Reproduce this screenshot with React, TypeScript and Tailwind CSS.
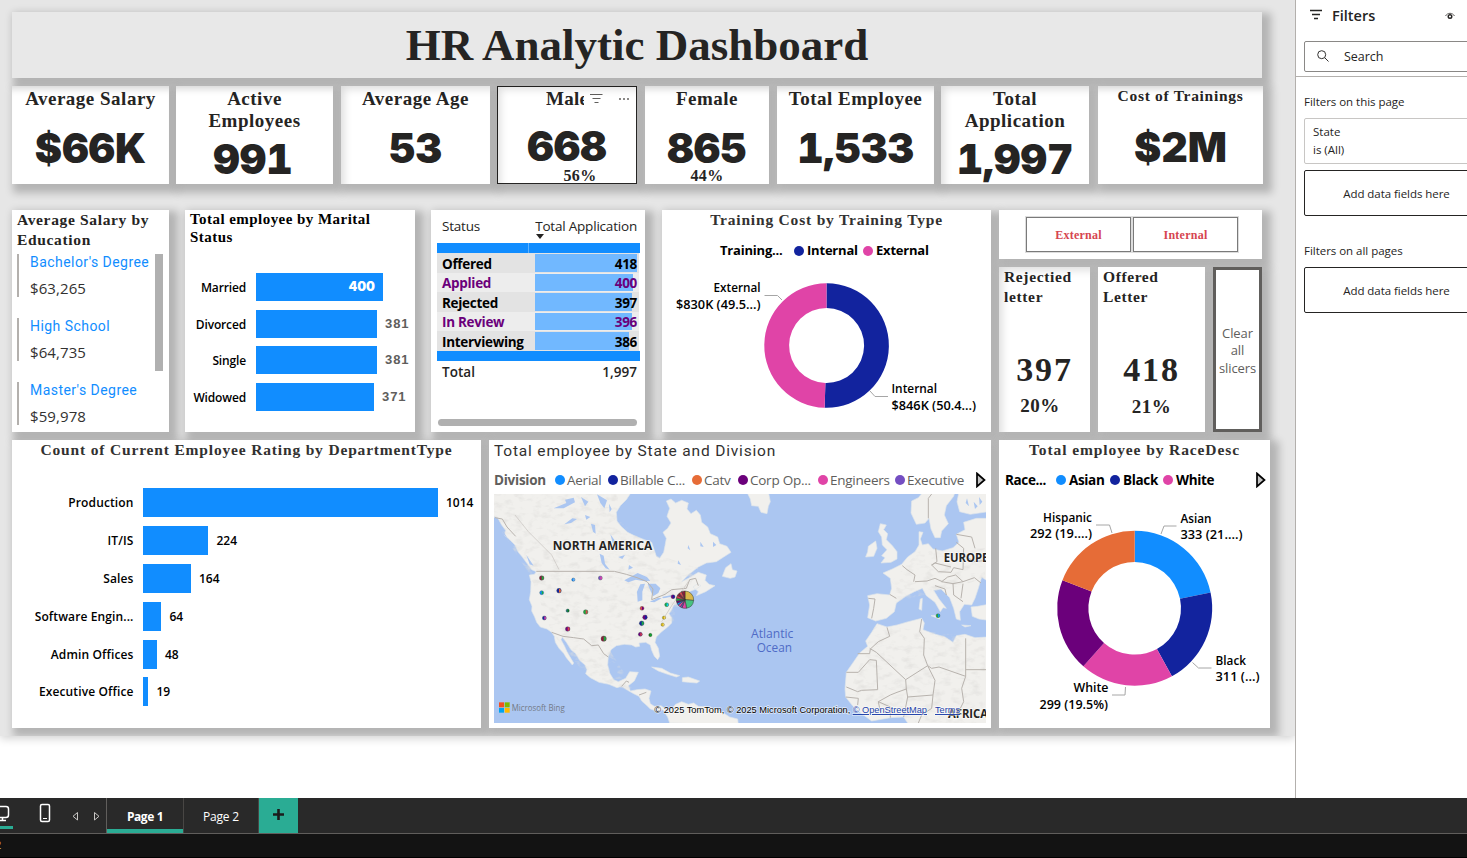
import type { ReactNode } from "react";

const SHADOW = "shadow-[5px_5px_8px_4px_rgba(0,0,0,0.22)]";

function Card({ className = "", shade = "", children }: { className?: string; shade?: string; children?: ReactNode }) {
  return (
    <section className={`relative shrink-0 overflow-visible bg-white ${SHADOW} ${className}`}>
      {shade && <div className={`pointer-events-none absolute inset-0 ${shade}`} />}
      {children}
    </section>
  );
}

const TOP = "shadow-[inset_0_9px_7px_-6px_rgba(0,0,0,0.16)]";
const TOP_LEFT = "shadow-[inset_8px_8px_8px_-5px_rgba(0,0,0,0.14)]";

function Kpi({
  width,
  gap,
  shade = TOP,
  title,
  titleClass = "text-[19px] leading-[22px] tracking-[0.5px] pt-[2px]",
  value,
  valueClass = "mt-[21px]",
  note,
}: {
  width: string;
  gap: string;
  shade?: string;
  title: ReactNode;
  titleClass?: string;
  value: string;
  valueClass?: string;
  note?: ReactNode;
}) {
  return (
    <Card className={`flex h-[98px] flex-col items-center ${width} ${gap}`} shade={shade}>
      <h2 className={`text-center font-['Liberation_Serif',serif] font-bold whitespace-nowrap text-[#252423] ${titleClass}`}>{title}</h2>
      <div className={`font-['Inter',sans-serif] text-[41px] leading-[34px] font-black whitespace-nowrap text-[#252423] tabular-nums ${valueClass}`}>{value}</div>
      {note}
    </Card>
  );
}

const education = [
  { name: "Bachelor's Degree", pay: "$63,265" },
  { name: "High School", pay: "$64,735" },
  { name: "Master's Degree", pay: "$59,978" },
];

const marital = [
  { name: "Married", value: 400, width: 127 },
  { name: "Divorced", value: 381, width: 121 },
  { name: "Single", value: 381, width: 121 },
  { name: "Widowed", value: 371, width: 118 },
];

const departments = [
  { name: "Production", value: 1014, width: 295 },
  { name: "IT/IS", value: 224, width: 65.5 },
  { name: "Sales", value: 164, width: 48 },
  { name: "Software Engin...", value: 64, width: 18.5 },
  { name: "Admin Offices", value: 48, width: 14 },
  { name: "Executive Office", value: 19, width: 5.5 },
];

const statuses = [
  { name: "Offered", value: 418, width: 102 },
  { name: "Applied", value: 400, width: 97.5 },
  { name: "Rejected", value: 397, width: 97 },
  { name: "In Review", value: 396, width: 96.5 },
  { name: "Interviewing", value: 386, width: 94 },
];

function ring(cx: number, cy: number, outer: number, inner: number, from: number, to: number) {
  const p = (r: number, a: number) => {
    const t = (a * Math.PI) / 180;
    return `${(cx + r * Math.sin(t)).toFixed(2)} ${(cy - r * Math.cos(t)).toFixed(2)}`;
  };
  const big = to - from > 180 ? 1 : 0;
  return `M${p(outer, from)}A${outer} ${outer} 0 ${big} 1 ${p(outer, to)}L${p(inner, to)}A${inner} ${inner} 0 ${big} 0 ${p(inner, from)}Z`;
}

function ChartText({ x, y, w, children }: { x: number; y: number; w: number; children: string }) {
  return (
    <text x={x} y={y} textLength={w} lengthAdjust="spacingAndGlyphs" className="fill-black font-['Open_Sans',sans-serif] text-[12px] font-semibold">
      {children}
    </text>
  );
}

function TrainingDonut() {
  return (
    <svg width="329" height="165" viewBox="662 267 329 165" className="block">
      <path d={ring(826.5, 345.5, 62.3, 37.5, 0, 181.7)} fill="#12239e" />
      <path d={ring(826.5, 345.5, 62.3, 37.5, 181.7, 360)} fill="#e044a7" />
      <path d="M764.5 295.5h13l4.5 4.500M870 391l5 5.500h13" fill="none" stroke="#a6a6a6" />
      <ChartText x={713.5} y={292} w={47}>External</ChartText>
      <ChartText x={676} y={309} w={84.500}>$830K (49.5...)</ChartText>
      <ChartText x={891.5} y={393} w={45.500}>Internal</ChartText>
      <ChartText x={891.5} y={410} w={84.500}>$846K (50.4...)</ChartText>
    </svg>
  );
}

function RaceDonut() {
  const parts = [
    { to: 78.2, fill: "#118dff" },
    { to: 151.3, fill: "#12239e" },
    { to: 221.5, fill: "#e044a7" },
    { to: 291.3, fill: "#6b007b" },
    { to: 360, fill: "#e66c37" },
  ];
  return (
    <svg width="271" height="230" viewBox="999 498 271 230" className="block">
      {parts.map((p, i) => (
        <path key={p.fill} d={ring(1134.7, 608.3, 77.5, 46.3, i ? parts[i - 1].to : 0, p.to)} fill={p.fill} />
      ))}
      <path d="M1096 525h13.500l2.500 8M1176.500 526h-12.500l-3 8M1192.500 662.500l6 5.500h13M1112 695h13l.5-8" fill="none" stroke="#a6a6a6" />
      <ChartText x={1043} y={522} w={49}>Hispanic</ChartText>
      <ChartText x={1030} y={538} w={62}>292 (19....)</ChartText>
      <ChartText x={1180.5} y={523} w={31}>Asian</ChartText>
      <ChartText x={1180.5} y={539} w={62}>333 (21....)</ChartText>
      <ChartText x={1215.5} y={665} w={30.500}>Black</ChartText>
      <ChartText x={1215.5} y={681} w={44}>311 (...)</ChartText>
      <ChartText x={1073.5} y={692} w={35}>White</ChartText>
      <ChartText x={1039.5} y={709} w={68.500}>299 (19.5%)</ChartText>
    </svg>
  );
}

const mapDots: [number, number, number, string, string][] = [
  [170, 429, 7, "#8c1a3c", "#1aab40"],
  [265, 434, 5, "#118dff", "#8fb8e8"],
  [346, 429, 6, "#744ec2", "#e044a7"],
  [170, 473, 6, "#118dff", "#1aab40"],
  [222, 467, 7, "#12239e", "#e66c37"],
  [248, 527, 5, "#197278", "#107c10"],
  [302, 531, 7, "#1aab40", "#d64550"],
  [178, 549, 6, "#12239e", "#e044a7"],
  [248, 582, 7, "#6b007b", "#d64550"],
  [356, 611, 8, "#8c1a3c", "#1aab40"],
  [471, 520, 6, "#d64550", "#6b007b"],
  [480, 547, 7, "#6b007b", "#12239e"],
  [470, 565, 7, "#12239e", "#1aab40"],
  [466, 598, 6, "#6b007b", "#d64550"],
  [496, 600, 5, "#107c10", "#1aab40"],
  [537, 548, 5, "#d9b300", "#e8d16c"],
  [533, 569, 5, "#d9b300", "#e8d16c"],
  [545, 509, 6, "#1aab40", "#15c6f4"],
  [564, 485, 6, "#6b007b", "#12239e"],
  [1359, 542, 6, "#1aab40", "#118dff"],
];

function BubblePie() {
  const colors = ["#d9b84a", "#46c281", "#e044a7", "#744ec2", "#e044a7", "#118dff", "#6b007b", "#1aab40", "#d64550", "#8c1a3c", "#d64550", "#8c1a3c"];
  const stops = [0, 95, 170, 200, 214, 232, 246, 262, 280, 300, 318, 338, 360];
  return (
    <g stroke="#2c3a2e" strokeWidth="1.5">
      {colors.map((c, i) => (
        <path key={i} d={ring(600, 494, 26, 0.1, stops[i], stops[i + 1])} fill={c} />
      ))}
    </g>
  );
}

/* The map is drawn on a grid three times as fine as its box. */
function WorldMap() {
  return (
    <svg width="492" height="229" viewBox="27 177 1476 687" className="block">
      <defs>
        <filter id="relief" x="0" y="0" width="100%" height="100%">
          <feTurbulence type="fractalNoise" baseFrequency="0.035 0.06" numOctaves="3" seed="4" />
          <feColorMatrix values="0 0 0 0 0.75  0 0 0 0 0.74  0 0 0 0 0.72  0 2.6 0 0 -1.25" />
          <feComposite in2="SourceGraphic" operator="in" />
        </filter>
      </defs>
      <rect x="27" y="177" width="1476" height="687" fill="#abc6f1" />
      <g id="land" fill="#f1f0ed" stroke="#dfe5ea" strokeWidth="2" strokeLinejoin="round">
        <path d="M20 170L20 244L38 248L50 270L62 286L58 300L78 318L90 330L100 352L112 366L128 388L140 404L154 410L148 418L133 420L138 440L137 470L133 494L141 514L140 528L149 546L155 562L166 576L186 582L200 592L208 604L211 622L222 640L236 655L244 668L262 690L266 684L254 664L246 650L238 632L228 614L232 606L244 622L258 644L272 656L284 676L300 690L306 704L302 716L316 728L342 742L372 748L396 758L410 754L428 766L446 776L462 784L470 798L484 810L496 822L514 828L534 824L548 846L554 864L760 870L758 852L734 846L712 832L692 822L668 816L640 814L626 804L610 808L590 800L572 808L556 826L544 824L528 812L508 814L496 806L492 790L498 768L480 762L456 764L436 768L430 752L448 738L460 712L434 710L422 730L400 740L386 734L374 714L368 690L370 664L378 644L394 632L418 628L440 630L452 636L464 634L462 624L482 622L496 630L500 646L508 664L518 674L524 664L520 640L510 622L514 606L530 590L548 576L560 564L560 548L552 536L560 524L566 510L590 500L612 494L604 482L612 470L634 462L648 452L638 446L624 456L640 470L634 482L662 470L690 452L672 448L660 436L664 420L640 412L610 430L590 440L612 418L640 396L664 384L694 380L716 366L738 352L726 334L704 326L698 306L676 296L668 276L650 262L646 240L634 226L618 236L606 222L610 204L590 196L572 204L558 192L544 198L554 220L546 244L558 264L548 280L534 292L544 310L540 332L536 352L524 370L514 364L508 346L500 322L478 314L452 304L428 292L408 274L396 258L394 232L406 212L424 194L440 170Z" />
        <path d="M712 424L722 398L738 386L742 404L756 408L750 426L736 430Z" />
        <path d="M785 170L796 192L800 212L820 214L828 232L846 236L850 214L856 200L850 170Z" />
        <path d="M500 696L530 700L556 714L584 722L574 726L548 718L520 708ZM592 728L610 726L644 738L636 744L610 742L592 740Z" />
        <path d="M1315 170L1300 188L1280 198L1278 234L1294 268L1320 264L1332 250L1338 282L1350 308L1366 308L1370 288L1390 266L1378 240L1384 212L1406 184L1410 170Z" />
        <path d="M1422 170L1416 200L1424 230L1456 238L1510 230L1510 250L1474 250L1436 262L1440 284L1414 298L1422 322L1404 338L1372 348L1344 342L1330 326L1312 330L1306 312L1314 292L1302 290L1302 330L1290 350L1268 366L1250 388L1222 402L1194 414L1216 430L1220 460L1214 480L1176 476L1148 482L1154 510L1148 548L1172 558L1204 550L1228 530L1234 504L1262 484L1288 470L1312 460L1324 482L1350 502L1366 530L1374 518L1384 520L1362 492L1346 466L1368 462L1394 488L1406 520L1414 552L1426 556L1424 530L1438 508L1460 510L1470 490L1480 460L1490 426L1510 440L1510 170Z" />
        <path d="M1186 266L1204 270L1196 284L1208 296L1204 314L1222 332L1236 350L1236 372L1218 382L1188 384L1200 368L1190 362L1206 344L1192 330L1190 306L1180 290Z" />
        <path d="M1150 334L1172 318L1176 340L1166 364L1142 366L1148 350Z" />
        <path d="M1306 492L1312 490L1310 526L1302 522ZM1338 542L1362 540L1364 552ZM1430 570L1458 572L1440 576Z" />
        <path d="M1510 508L1478 514L1458 516L1462 544L1482 552L1510 556Z" />
        <path d="M1176 566L1206 576L1236 570L1270 560L1310 550L1318 564L1314 584L1346 596L1380 606L1404 622L1414 602L1440 598L1470 608L1510 606L1510 870L1272 870L1256 846L1216 848L1160 858L1130 836L1104 814L1082 786L1080 762L1084 712L1106 680L1124 654L1148 634L1142 618L1160 592Z" />
      </g>
      <g filter="url(#relief)" opacity="0.7">
        <path d="M20 177L400 177L395 250L520 360L640 400L560 570L370 640L460 780L300 716L200 592L135 420L20 244ZM1170 570L1500 610V864H1280L1090 780Z" />
        <path d="M1220 440L1300 350L1500 340V430L1400 460L1230 500Z" />
      </g>
      <g fill="#abc6f1">
        <path d="M418 436L440 424L458 414L486 426L496 438L474 438L452 434L430 442ZM458 500L456 470L466 448L480 446L472 470L472 496ZM488 446L512 446L526 460L520 474L504 484L494 462ZM494 500L520 488L530 490L508 502ZM530 486L560 480L556 486L536 490Z" />
        <path d="M344 356L356 362L360 386L374 404L362 400L350 384ZM318 266L330 270L332 296L324 290ZM238 268L262 250L276 252L258 264ZM206 220L244 204L240 194L266 188L270 202L236 220ZM336 178L366 196L358 220L346 204ZM288 186L310 200L300 214ZM376 298L392 320L384 326ZM400 366L420 360L412 372ZM610 330L616 346L608 340ZM646 320L656 336L646 334Z" />
        <path d="M372 206L380 222L374 232ZM300 240L316 246L304 254ZM432 390L444 398L430 404ZM580 376L588 390L578 386ZM684 320L694 330L684 336ZM124 360L146 392L134 388ZM40 268L66 306L58 300ZM1446 190L1452 214L1442 204ZM1466 200L1478 214L1470 222ZM1482 186L1492 200L1484 210Z" />
      </g>
      <g fill="none" stroke="#b8b3ae" strokeWidth="3" strokeLinejoin="round">
        <path d="M154 409H388L424 418L456 428L486 440L504 462L500 494L540 478L560 464L604 460L614 434L632 430L640 452" />
        <path d="M30 248L52 252L66 276L92 304M200 592L234 604L266 608L296 612L320 632L340 630L356 656L370 666M410 754L424 738L432 742M462 780L484 772" />
        <path d="M1150 490L1170 492L1166 520L1160 550M1214 478L1234 490M1252 392L1266 404L1290 420L1286 440M1290 440L1326 438L1350 430L1372 440M1352 340L1356 380L1340 390L1360 410L1398 412L1406 398L1434 404M1340 390L1350 384L1398 396M1434 404L1436 340L1414 322M1370 440L1388 426L1412 420L1434 440L1404 446ZM1434 440L1468 428L1488 444M1404 446L1406 480L1434 500M1434 446L1428 490M1436 362L1470 380L1504 376M1414 298L1460 306L1470 340M1330 250V190L1340 177M1350 452L1380 462L1384 480" />
        <path d="M1206 577L1214 604L1180 620L1156 642L1154 656H1118M1154 640L1174 652L1262 734L1328 692L1316 660L1318 610L1304 590L1310 552M1174 676L1178 764L1130 766L1118 770L1084 756M1174 676L1154 674L1120 712H1084M1262 734L1264 762L1236 772L1216 780L1180 800L1186 830M1328 692L1340 700L1362 696L1442 724V610M1442 704H1503M1442 724L1430 760L1436 800L1416 840M1328 692L1350 736L1344 780L1268 786L1264 762M1268 786L1256 846M1344 780L1340 820L1310 840L1300 864M1082 786L1120 790L1118 810M1180 800L1216 816L1216 848" />
      </g>
      <g fill="none" stroke="#cfcbc8" strokeWidth="2.500">
        <path d="M90 240L130 290L170 330L200 360L222 404M610 440L560 512L530 560" />
      </g>
      {mapDots.map(([x, y, r, a, b]) => (
        <g key={`${x}-${y}`}>
          <circle cx={x} cy={y} r={r} fill={a} stroke="#3a4a48" strokeWidth="1" />
          <path d={`M${x} ${y - r + 1}A${r - 1} ${r - 1} 0 0 1 ${x} ${y + r - 1}Z`} fill={b} />
        </g>
      ))}
      <BubblePie />
      <g className="font-['Open_Sans',sans-serif]">
        <text x="203" y="345" textLength="299" lengthAdjust="spacingAndGlyphs" className="fill-[#252423] stroke-white/70 text-[36px] font-bold [paint-order:stroke]" strokeWidth="4">NORTH AMERICA</text>
        <text x="1376" y="381" textLength="134" lengthAdjust="spacingAndGlyphs" className="fill-[#252423] stroke-white/70 text-[36px] font-bold [paint-order:stroke]" strokeWidth="4">EUROPE</text>
        <text x="1389" y="849" textLength="120" lengthAdjust="spacingAndGlyphs" className="fill-[#252423] stroke-white/70 text-[36px] font-bold [paint-order:stroke]" strokeWidth="4">AFRICA</text>
        <text x="798" y="609" textLength="127" lengthAdjust="spacingAndGlyphs" className="fill-[#4f6bc6] text-[36px] font-medium">Atlantic</text>
        <text x="815" y="650" textLength="106" lengthAdjust="spacingAndGlyphs" className="fill-[#4f6bc6] text-[36px] font-medium">Ocean</text>
        <path d="M42 802h15v15h-15Z" fill="#f25022" />
        <path d="M59 802h15v15h-15Z" fill="#7fba00" />
        <path d="M42 819h15v14h-15Z" fill="#00a4ef" />
        <path d="M59 819h15v14h-15Z" fill="#ffb900" />
        <text x="80" y="828" textLength="159" lengthAdjust="spacingAndGlyphs" className="fill-[#737a86] text-[28px] font-medium">Microsoft Bing</text>
      </g>
      <g className="font-['Liberation_Sans',sans-serif] text-[28.5px] [paint-order:stroke]" stroke="#ffffff" strokeOpacity="0.65" strokeWidth="4">
        <text x="508" y="834" textLength="588" lengthAdjust="spacingAndGlyphs" className="fill-black">© 2025 TomTom, © 2025 Microsoft Corporation,</text>
        <text x="1103" y="834" textLength="223" lengthAdjust="spacingAndGlyphs" className="fill-[#1d3fa8] underline">© OpenStreetMap</text>
        <text x="1350" y="834" textLength="75" lengthAdjust="spacingAndGlyphs" className="fill-[#1d3fa8] underline">Terms</text>
      </g>
    </svg>
  );
}

function Legend({ items, className, dot }: { items: [string, string, string][]; className: string; dot: string }) {
  return (
    <>
      {items.map(([label, color, width]) => (
        <span key={label} className={`flex shrink-0 items-center ${width}`}>
          <i className={`h-[10px] w-[10px] shrink-0 rounded-full ${color} ${dot}`} />
          <span className={`whitespace-nowrap ${className}`}>{label}</span>
        </span>
      ))}
    </>
  );
}

function NextArrow() {
  return (
    <svg width="10" height="16" viewBox="0 0 10 16" className="mb-px shrink-0">
      <path d="M1 1.500L8.500 8L1 14.500Z" fill="#c4c4c4" stroke="#000" strokeWidth="1.700" />
    </svg>
  );
}

function TopRow() {
  return (
    <div className="mt-[8px] flex h-[98px]">
      <Kpi width="w-[157px]" gap="mr-[7px]" title="Average Salary" value="$66K" />
      <Kpi
        width="w-[157px]"
        gap="mr-[8px]"
        title={<>Active<br />Employees</>}
        value="991"
        valueClass="mt-[10px] pr-[3px]"
      />
      <Kpi width="w-[149px]" gap="mr-[7px]" shade={TOP_LEFT} title="Average Age" value="53" />
      <Kpi
        width="w-[140px] outline -outline-offset-1 outline-[#252423]"
        gap="mr-[8px]"
        shade={TOP_LEFT}
        title={
          <span className="flex items-center pl-[49px]">
            <span className="w-[38px] overflow-hidden">Male</span>
            <svg width="42" height="14" viewBox="0 0 42 14" className="ml-[6px]" fill="none">
              <path d="M0 2.500h12.500M2.500 6.500h8M4.500 10.500h4" stroke="#605e5c" />
              <path d="M29 7h2M33 7h2M37 7h2" stroke="#8a8886" strokeWidth="2" />
            </svg>
          </span>
        }
        titleClass="self-start text-[19px] leading-[22px] tracking-[0.3px] pt-[2px]"
        value="668"
        valueClass="mt-[19px]"
        note={<div className="mt-[5px] pl-[26px] font-['Liberation_Serif',serif] text-[16px] leading-[16px] font-bold tracking-[0.4px] text-[#252423]">56%</div>}
      />
      <Kpi
        width="w-[124px]"
        gap="mr-[8px]"
        title="Female"
        value="865"
        note={<div className="mt-[3px] font-['Liberation_Serif',serif] text-[16px] leading-[16px] font-bold tracking-[0.4px] text-[#252423]">44%</div>}
      />
      <Kpi width="w-[157px]" gap="mr-[7px]" title="Total Employee" value="1,533" />
      <Kpi
        width="w-[148px]"
        gap="mr-[9px]"
        shade={TOP_LEFT}
        title={<>Total<br />Application</>}
        value="1,997"
        valueClass="mt-[10px]"
      />
      <Kpi
        width="w-[165px]"
        gap=""
        title="Cost of Trainings"
        titleClass="text-[15.5px] leading-[20px] tracking-[0.7px]"
        value="$2M"
        valueClass="mt-[24px]"
      />
    </div>
  );
}

function MiddleRow() {
  return (
    <div className="mt-[26px] flex h-[222px]">
      <Card className="mr-[16px] flex w-[157px] flex-col">
        <h2 className="pl-[5px] font-['Liberation_Serif',serif] text-[15.5px] leading-[20px] font-bold tracking-[0.65px] whitespace-nowrap text-[#252423]">
          Average Salary by<br />Education
        </h2>
        <div className="mt-[4px] flex pl-[5px]">
          <div className="flex w-[138px] flex-col gap-[21px]">
            {education.map((e) => (
              <div key={e.name} className="h-[43px] border-l-2 border-[#b3b0ad] pl-[11px]">
                <div className="font-['Roboto',sans-serif] text-[14px] leading-[17px] tracking-[0.45px] whitespace-nowrap text-[#118dff]">{e.name}</div>
                <div className="mt-[7px] font-['Open_Sans',sans-serif] text-[15px] leading-[20px] tracking-[0.1px] text-[#323130]">{e.pay}</div>
              </div>
            ))}
          </div>
          <div className="h-[117px] w-[8px] bg-[#b0b0b0]" />
        </div>
      </Card>

      <Card className="mr-[16px] flex w-[230px] flex-col">
        <h2 className="pl-[5px] font-['Liberation_Serif',serif] text-[15px] leading-[18px] font-bold tracking-[0.45px] whitespace-nowrap text-black">
          Total employee by Marital<br />Status
        </h2>
        <div className="mt-[27px] flex flex-col gap-[8.600px]">
          {marital.map((m, i) => (
            <div key={m.name} className="flex h-[28px] items-center">
              <span className="w-[61px] pt-[2px] text-right font-['Open_Sans',sans-serif] text-[12px] font-semibold tracking-[-0.15px] text-black">{m.name}</span>
              <div className="ml-[10px] flex h-full items-center justify-end bg-[#118dff] pr-[8px]" style={{ width: m.width }}>
                {i === 0 && <span className="font-['Inter',sans-serif] text-[12.5px] font-black text-white">{m.value}</span>}
              </div>
              {i > 0 && <span className="ml-[8px] font-['Liberation_Sans',sans-serif] text-[13px] font-bold tracking-[0.95px] text-[#605e5c]">{m.value}</span>}
            </div>
          ))}
        </div>
      </Card>

      <Card className="mr-[17px] flex w-[214px] flex-col pl-[6px] font-['Open_Sans',sans-serif]">
        <div className="flex h-[33px] w-[203px] justify-between pt-[6px] pr-[3px] pl-[5px] text-[13.500px] leading-[20px] tracking-[-0.2px] text-[#252423]">
          <span>Status</span>
          <span className="relative">
            Total Application
            <i className="absolute top-[18px] left-px h-0 w-0 border-x-[4.500px] border-t-[5px] border-x-transparent border-t-[#252423]" />
          </span>
        </div>
        <div className="flex h-[10px] w-[203px] bg-[#118dff]">
          <div className="w-[92px] border-r border-[#5fb2ff]" />
        </div>
        {statuses.map((s, i) => (
          <div
            key={s.name}
            className={`flex h-[19.600px] w-[202px] items-center text-[13.500px] font-bold tracking-[-0.3px] ${i % 2 ? "bg-[#ededed] text-[#6b007b]" : "bg-[#e3e3e3] text-black"}`}
          >
            <span className="w-[98px] pt-[2px] pl-[5px]">{s.name}</span>
            <div className="relative flex h-full w-[102px] items-center justify-end">
              <div className="h-[17.500px] flex-none bg-[#71b8ff]" style={{ width: s.width, marginRight: 102 - s.width }} />
              <span className="absolute right-0 pt-[2px]">{s.value}</span>
            </div>
          </div>
        ))}
        <div className="h-[10px] w-[203px] bg-[#118dff]" />
        <div className="flex w-[203px] justify-between pt-[1px] pr-[3px] pl-[5px] text-[13.500px] leading-[20px] font-semibold tracking-[0.05px] text-[#252423]">
          <span>Total</span>
          <span>1,997</span>
        </div>
        <div className="mt-[37px] ml-px h-[7px] w-[199px] rounded-full bg-[#b0b0b0]" />
      </Card>

      <Card className="mr-[8px] flex w-[329px] flex-col">
        <h2 className="text-center font-['Liberation_Serif',serif] text-[15.500px] leading-[20px] font-bold tracking-[0.8px] text-[#323130]">
          Training Cost by Training Type
        </h2>
        <div className="mt-[11px] flex h-[20px] items-center pl-[58px] font-['Open_Sans',sans-serif] text-[13px] font-bold tracking-[-0.2px] text-black">
          <span className="w-[74px]">Training...</span>
          <Legend items={[["Internal", "bg-[#12239e]", "w-[69px]"], ["External", "bg-[#e044a7]", "w-[70px]"]]} className="" dot="mr-[3px]" />
        </div>
        <div className="mt-[6px]"><TrainingDonut /></div>
      </Card>

      <div className="flex w-[263px] flex-col">
        <Card className="flex h-[49px] items-center gap-[2px] pl-[27px]">
          {["External", "Internal"].map((s) => (
            <button key={s} className="h-[35px] w-[105px] border border-[#7a7a7a] font-['Liberation_Serif',serif] text-[12px] font-bold tracking-[0.25px] text-[#d64550] outline outline-[#dddddd]">
              {s}
            </button>
          ))}
        </Card>
        <div className="mt-[8px] flex h-[165px]">
          <Card className="mr-[8px] w-[91px] font-['Liberation_Serif',serif] font-bold text-[#252423]" shade={TOP_LEFT}>
            <h2 className="pl-[5px] text-[15.500px] leading-[20px] tracking-[0.65px]">Rejectied<br />letter</h2>
            <div className="mt-[46px] text-center text-[34px] leading-[34px] tracking-[1.800px]">397</div>
            <div className="mt-[9px] pr-[9px] text-center text-[19px] leading-[20px] tracking-[0.5px]">20%</div>
          </Card>
          <Card className="mr-[8px] w-[107px] font-['Liberation_Serif',serif] font-bold text-[#252423]">
            <h2 className="pl-[5px] text-[15.500px] leading-[20px] tracking-[0.6px]">Offered<br />Letter</h2>
            <div className="mt-[46px] text-center text-[34px] leading-[34px] tracking-[1.800px]">418</div>
            <div className="mt-[10px] text-center text-[19px] leading-[20px] tracking-[0.5px]">21%</div>
          </Card>
          <Card className="flex w-[49px] items-center justify-center border-[3px] border-[#605e5c]">
            <button className="pt-[3px] text-center font-['Open_Sans',sans-serif] text-[13px] leading-[17.500px] tracking-[-0.1px] text-[#605e5c]">
              Clear<br />all<br />slicers
            </button>
          </Card>
        </div>
      </div>
    </div>
  );
}

function BottomRow() {
  return (
    <div className="mt-[8px] flex h-[288px]">
      <Card className="mr-[8px] flex w-[469px] flex-col">
        <h2 className="text-center font-['Liberation_Serif',serif] text-[15.500px] leading-[20px] font-bold tracking-[0.830px] whitespace-nowrap text-[#323130]">
          Count of Current Employee Rating by DepartmentType
        </h2>
        <div className="mt-[28px] flex flex-col gap-[8.900px] font-['Open_Sans',sans-serif] text-[12px] font-semibold text-black">
          {departments.map((d) => (
            <div key={d.name} className="flex h-[29px] items-center">
              <span className="w-[121.500px] pt-px text-right tracking-[0.120px]">{d.name}</span>
              <div className="ml-[9px] h-full bg-[#118dff]" style={{ width: d.width }} />
              <span className="ml-[8.500px] pt-px">{d.value}</span>
            </div>
          ))}
        </div>
      </Card>

      <Card className="mr-[8px] flex w-[502px] flex-col pl-[5px]">
        <h2 className="pt-px font-['Roboto',sans-serif] text-[15.500px] leading-[20px] tracking-[0.820px] text-[#323130]">Total employee by State and Division</h2>
        <div className="mt-[9px] flex h-[20px] items-center font-['Open_Sans',sans-serif] text-[13.500px] tracking-[-0.25px] text-[#605e5c]">
          <span className="w-[61px] font-bold">Division</span>
          <Legend
            items={[
              ["Aerial", "bg-[#118dff]", "w-[53px]"],
              ["Billable C...", "bg-[#12239e]", "w-[84px]"],
              ["Catv", "bg-[#e66c37]", "w-[46px]"],
              ["Corp Op...", "bg-[#6b007b]", "w-[80px]"],
              ["Engineers", "bg-[#e044a7]", "w-[77px]"],
              ["Executive", "bg-[#744ec2]", "w-[81px]"],
            ]}
            className=""
            dot="mr-[2px]"
          />
          <NextArrow />
        </div>
        <div className="mt-[4px] w-[492px]"><WorldMap /></div>
      </Card>

      <Card className="flex w-[271px] flex-col">
        <h2 className="text-center font-['Liberation_Serif',serif] text-[15.500px] leading-[20px] font-bold tracking-[0.9px] text-[#323130]">Total employee by RaceDesc</h2>
        <div className="mt-[10px] flex h-[20px] items-center pl-[6px] font-['Open_Sans',sans-serif] text-[13.500px] font-bold tracking-[-0.35px] text-black">
          <span className="w-[51px]">Race...</span>
          <Legend items={[["Asian", "bg-[#118dff]", "w-[54px]"], ["Black", "bg-[#12239e]", "w-[53px]"], ["White", "bg-[#e044a7]", "w-[93px]"]]} className="" dot="mr-[3px]" />
          <NextArrow />
        </div>
        <div className="mt-[8px]"><RaceDonut /></div>
      </Card>
    </div>
  );
}

function FiltersPane() {
  return (
    <aside className="w-[172px] overflow-hidden border-l border-[#b3b0ad] bg-white font-['Open_Sans',sans-serif] text-[#252423]">
      <div className="flex h-[77px] flex-col border-b border-[#b3b0ad] pl-[8px]">
        <div className="flex h-[31px] items-center pl-[6px]">
          <svg width="12" height="12" viewBox="0 0 12 12" className="mb-[1px]">
            <path d="M0 1.500h12M2 5.500h8M4 9.500h4" stroke="#252423" strokeWidth="1.300" />
          </svg>
          <span className="ml-[10px] w-[103px] text-[14.500px] font-semibold">Filters</span>
          <svg width="10" height="8" viewBox="0 0 10 8" fill="none" className="ml-[10px]">
            <path d="M.5 4C2.500.4 7.500.4 9.500 4" stroke="#605e5c" />
            <circle cx="5" cy="4.500" r="1.800" stroke="#252423" strokeWidth="1.400" />
          </svg>
        </div>
        <div className="mt-[10px] flex h-[31px] w-[180px] shrink-0 items-center rounded-[2px] border border-[#8a8886] pl-[12px]">
          <svg width="12" height="12" viewBox="0 0 12 12" fill="none" stroke="#323130" className="mb-[2px]">
            <circle cx="4.700" cy="4.700" r="4" />
            <path d="M7.700 7.700L11.500 11.500" />
          </svg>
          <span className="ml-[15px] pt-px text-[12.500px] tracking-[-0.05px]">Search</span>
        </div>
      </div>
      <div className="pl-[8px] text-[11.500px]">
        <h3 className="mt-[16px] leading-[18px] tracking-[-0.03px] whitespace-nowrap">Filters on this page</h3>
        <div className="mt-[7px] h-[46px] w-[180px] rounded-[2px] border border-[#c8c6c4] pt-[4px] pl-[8px] leading-[18px]">
          State<br />is (All)
        </div>
        <div className="mt-[6px] flex h-[46px] w-[185px] items-center justify-center rounded-[2px] border border-[#252423] pt-[2px] text-[11.500px] tracking-[-0.05px] whitespace-nowrap">Add data fields here</div>
        <h3 className="mt-[26px] leading-[18px] tracking-[-0.03px]">Filters on all pages</h3>
        <div className="mt-[7px] flex h-[46px] w-[185px] items-center justify-center rounded-[2px] border border-[#252423] pt-[2px] text-[11.500px] tracking-[-0.05px] whitespace-nowrap">Add data fields here</div>
      </div>
    </aside>
  );
}

function PageTabs() {
  return (
    <footer className="h-[60px] bg-[#131313] font-['Open_Sans',sans-serif] text-white">
      <div className="flex h-[36px] border-b border-[#605e5c] bg-[#292929]">
        <div className="flex w-[107px] border-r border-[#605e5c]">
          <svg width="106" height="35" viewBox="0 0 106 35" fill="none">
            <path d="M-6 8.500H6Q8.500 8.500 8.500 11V17Q8.500 19.500 6 19.500H-6M-3 22.500H6M2.500 19.500V22" stroke="#fff" strokeWidth="1.500" />
            <path d="M-4 29.500H13" stroke="#2aac94" strokeWidth="3" />
            <rect x="40.500" y="6.500" width="9" height="17" rx="1.500" stroke="#fff" strokeWidth="1.500" />
            <path d="M43 20.500h4" stroke="#fff" />
            <path d="M77.500 14.500v7.500l-4.500-3.700ZM94.500 14.500v7.500l4.500-3.700Z" stroke="#c8c6c4" />
          </svg>
        </div>
        <div className="flex w-[76px] items-center justify-center border-b-4 border-[#2aac94] pt-[6px] text-[12px] font-bold tracking-[-0.4px]">Page 1</div>
        <div className="flex w-[76px] items-center justify-center border-x border-[#484644] pt-[2px] text-[12px] tracking-[-0.2px]">Page 2</div>
        <div className="flex w-[39px] items-center justify-center bg-[#2aac94] pb-[2px]">
          <svg width="11" height="11" viewBox="0 0 11 11"><path d="M5.500 0v11M0 5.500h11" stroke="#1b1b1b" strokeWidth="2.600" /></svg>
        </div>
      </div>
      <div className="flex h-[24px] items-center overflow-hidden border-b border-black text-[11px] text-[#e8d3a5]"><span className="-ml-[5px]">2</span></div>
    </footer>
  );
}

export default function App() {
  return (
    <div className="flex h-[858px] w-[1467px] flex-col overflow-hidden bg-white">
      <div className="flex h-[798px]">
        <main className="w-[1295px] overflow-hidden">
          <div className="shadow-[0_2px_9px_rgba(0,0,0,0.2)]">
            <div className="h-[736px] overflow-hidden bg-[#e6e6e6] pt-[12px] pl-[12px]">
              <header className={`flex h-[66px] w-[1250px] items-center justify-center bg-[#e8e8e8] ${SHADOW}`}>
                <h1 className="font-['Liberation_Serif',serif] text-[45px] leading-[50px] font-bold whitespace-nowrap text-[#252423]">HR Analytic Dashboard</h1>
              </header>
              <TopRow />
              <MiddleRow />
              <BottomRow />
            </div>
          </div>
        </main>
        <FiltersPane />
      </div>
      <PageTabs />
    </div>
  );
}
